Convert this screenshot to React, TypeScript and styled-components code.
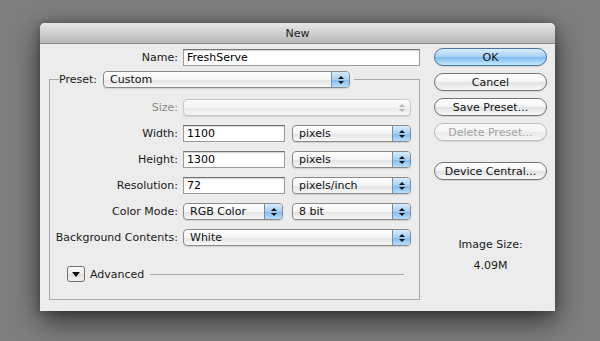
import React from 'react';
import styled, { createGlobalStyle } from 'styled-components';

const GlobalStyle = createGlobalStyle`
  html, body {
    margin: 0;
    padding: 0;
    background: #7e7e7e;
  }
  body {
    font-family: "DejaVu Sans", "Liberation Sans", sans-serif;
    font-size: 11px;
    color: #1a1a1a;
  }
`;

const Desktop = styled.div`
  width: 600px;
  height: 341px;
  box-sizing: border-box;
  padding: 23px 0 0 40px;
  background: #7e7e7e;
  overflow: hidden;
`;

const Window = styled.div`
  width: 515px;
  height: 288px;
  background: #ececec;
  border-radius: 5px 5px 0 0;
  box-shadow: 0 10px 28px rgba(0, 0, 0, 0.6), 0 0 10px rgba(0, 0, 0, 0.25);
  display: flex;
  flex-direction: column;
`;

const TitleBar = styled.div`
  height: 20px;
  border-bottom: 1px solid #8c8c8c;
  border-radius: 5px 5px 0 0;
  background: linear-gradient(#e6e6e6, #cfcfcf 50%, #b6b6b6);
  display: flex;
  align-items: center;
  justify-content: center;
  color: #1c1c1c;
  font-size: 11px;
`;

const Body = styled.div`
  display: flex;
  padding: 4px 8px 0 9px;
`;

const LeftColumn = styled.div`
  width: 371px;
  display: flex;
  flex-direction: column;
`;

const RightColumn = styled.div`
  width: 113px;
  margin-left: 14px;
  display: flex;
  flex-direction: column;
`;

const NameRow = styled.div`
  display: flex;
  align-items: center;
  height: 17px;
  margin-top: 1px;
`;

const Label = styled.span<{ $w: number; $disabled?: boolean }>`
  width: ${({ $w }) => $w}px;
  flex-shrink: 0;
  margin-right: 5px;
  display: flex;
  justify-content: flex-end;
  white-space: nowrap;
  color: ${({ $disabled }) => ($disabled ? '#8b8b8b' : '#1a1a1a')};
`;

const TextInput = styled.input<{ $w: number }>`
  width: ${({ $w }) => $w}px;
  height: 17px;
  box-sizing: border-box;
  flex-shrink: 0;
  margin: 0 7px 0 0;
  padding: 0 3px;
  border: 1px solid #9a9a9a;
  border-top-color: #727272;
  border-radius: 0;
  background: #fff;
  box-shadow: inset 0 1px 1px rgba(0, 0, 0, 0.18);
  font-family: inherit;
  font-size: 11px;
  color: #000;
  outline: none;
`;

const Group = styled.fieldset`
  width: 371px;
  box-sizing: border-box;
  margin: 5px 0 0;
  padding: 11px 8px 17px 9px;
  border: 1px solid #aaaaaa;
  min-width: 0;
`;

const Legend = styled.legend`
  padding: 0 4px 0 0;
`;

const LegendInner = styled.div`
  display: flex;
  align-items: center;
  height: 17px;
`;

const LegendLabel = styled.span`
  margin-right: 6px;
`;

const Row = styled.div`
  display: flex;
  align-items: center;
  height: 17px;
  & + & {
    margin-top: 9px;
  }
`;

const SelectBox = styled.div<{ $w: number; $disabled?: boolean; $gap?: number }>`
  width: ${({ $w }) => $w}px;
  height: 17px;
  box-sizing: border-box;
  flex-shrink: 0;
  margin-right: ${({ $gap }) => $gap ?? 0}px;
  display: flex;
  border: 1px solid ${({ $disabled }) => ($disabled ? '#c8c8c8' : '#8a8a8a')};
  border-radius: 4px;
  background: ${({ $disabled }) =>
    $disabled
      ? 'linear-gradient(#fbfbfb, #f2f2f2 50%, #e9e9e9 51%, #f5f5f5)'
      : 'linear-gradient(#ffffff, #f4f4f4 50%, #e3e3e3 51%, #f7f7f7)'};
  box-shadow: 0 1px 1px rgba(0, 0, 0, 0.12);
  overflow: hidden;
`;

const SelectText = styled.span`
  flex: 1;
  padding-left: 6px;
  line-height: 15px;
  white-space: nowrap;
  color: #111;
`;

const Stepper = styled.span<{ $disabled?: boolean }>`
  width: 17px;
  display: flex;
  flex-direction: column;
  align-items: center;
  justify-content: center;
  gap: 2px;
  border-left: 1px solid ${({ $disabled }) => ($disabled ? 'transparent' : '#6a92bd')};
  background: ${({ $disabled }) =>
    $disabled
      ? 'transparent'
      : 'linear-gradient(#d6ebfc, #a9d0f4 50%, #7fb9ee 51%, #b9ddfb)'};
`;

const ArrowUp = styled.span<{ $disabled?: boolean }>`
  width: 0;
  height: 0;
  border-left: 3px solid transparent;
  border-right: 3px solid transparent;
  border-bottom: 3px solid ${({ $disabled }) => ($disabled ? '#b4b4b4' : '#141414')};
`;

const ArrowDown = styled.span<{ $disabled?: boolean }>`
  width: 0;
  height: 0;
  border-left: 3px solid transparent;
  border-right: 3px solid transparent;
  border-top: 3px solid ${({ $disabled }) => ($disabled ? '#b4b4b4' : '#141414')};
`;

const AdvancedRow = styled.div`
  display: flex;
  align-items: center;
  height: 16px;
  margin-top: 20px;
  padding-left: 8px;
  padding-right: 7px;
`;

const Disclosure = styled.span`
  width: 18px;
  height: 16px;
  box-sizing: border-box;
  border: 1px solid #6f6f6f;
  border-radius: 3px;
  background: linear-gradient(#fdfdfd, #ececec 50%, #dcdcdc 51%, #f2f2f2);
  display: flex;
  align-items: center;
  justify-content: center;
  &::after {
    content: '';
    border-left: 4px solid transparent;
    border-right: 4px solid transparent;
    border-top: 5px solid #111;
  }
`;

const AdvancedText = styled.span`
  margin-left: 5px;
`;

const Rule = styled.span`
  flex: 1;
  height: 1px;
  margin-left: 6px;
  background: #a6a6a6;
`;

const PushButton = styled.div<{ $kind?: 'primary' | 'disabled'; $gap?: number }>`
  height: 18px;
  box-sizing: border-box;
  margin-bottom: ${({ $gap }) => $gap ?? 7}px;
  border-radius: 9px;
  display: flex;
  align-items: center;
  justify-content: center;
  font-size: 11px;
  white-space: nowrap;
  color: ${({ $kind }) => ($kind === 'disabled' ? '#a3a3a3' : '#111')};
  border: 1px solid
    ${({ $kind }) =>
      $kind === 'primary' ? '#4a74a8' : $kind === 'disabled' ? '#bdbdbd' : '#747474'};
  background: ${({ $kind }) =>
    $kind === 'primary'
      ? 'linear-gradient(#d9edfd, #a6d1f6 50%, #7cbbf0 51%, #c6e7fe)'
      : $kind === 'disabled'
        ? 'linear-gradient(#fbfbfb, #f3f3f3 50%, #eaeaea 51%, #f6f6f6)'
        : 'linear-gradient(#ffffff, #f3f3f3 50%, #e2e2e2 51%, #f8f8f8)'};
  box-shadow: 0 1px 1px rgba(0, 0, 0, 0.1);
`;

const SizeInfo = styled.div`
  margin-top: 47px;
  text-align: center;
  line-height: 21px;
  color: #1a1a1a;
`;

function Select({
  value,
  width,
  gap,
  disabled,
}: {
  value: string;
  width: number;
  gap?: number;
  disabled?: boolean;
}) {
  return (
    <SelectBox $w={width} $gap={gap} $disabled={disabled}>
      <SelectText>{value}</SelectText>
      <Stepper $disabled={disabled}>
        <ArrowUp $disabled={disabled} />
        <ArrowDown $disabled={disabled} />
      </Stepper>
    </SelectBox>
  );
}

function NewDocumentDialog() {
  return (
    <Window>
      <TitleBar>New</TitleBar>
      <Body>
        <LeftColumn>
          <NameRow>
            <Label $w={129}>Name:</Label>
            <TextInput $w={237} readOnly value="FreshServe" />
          </NameRow>
          <Group>
            <Legend>
              <LegendInner>
                <LegendLabel>Preset:</LegendLabel>
                <Select value="Custom" width={247} />
              </LegendInner>
            </Legend>
            <Row>
              <Label $w={119} $disabled>
                Size:
              </Label>
              <Select value="" width={228} disabled />
            </Row>
            <Row>
              <Label $w={119}>Width:</Label>
              <TextInput $w={102} readOnly value="1100" />
              <Select value="pixels" width={119} />
            </Row>
            <Row>
              <Label $w={119}>Height:</Label>
              <TextInput $w={102} readOnly value="1300" />
              <Select value="pixels" width={119} />
            </Row>
            <Row>
              <Label $w={119}>Resolution:</Label>
              <TextInput $w={102} readOnly value="72" />
              <Select value="pixels/inch" width={119} />
            </Row>
            <Row>
              <Label $w={119}>Color Mode:</Label>
              <Select value="RGB Color" width={100} gap={9} />
              <Select value="8 bit" width={119} />
            </Row>
            <Row>
              <Label $w={119}>Background Contents:</Label>
              <Select value="White" width={228} />
            </Row>
            <AdvancedRow>
              <Disclosure />
              <AdvancedText>Advanced</AdvancedText>
              <Rule />
            </AdvancedRow>
          </Group>
        </LeftColumn>
        <RightColumn>
          <PushButton $kind="primary">OK</PushButton>
          <PushButton>Cancel</PushButton>
          <PushButton>Save Preset...</PushButton>
          <PushButton $kind="disabled" $gap={21}>
            Delete Preset...
          </PushButton>
          <PushButton>Device Central...</PushButton>
          <SizeInfo>
            Image Size:
            <br />
            4.09M
          </SizeInfo>
        </RightColumn>
      </Body>
    </Window>
  );
}

export default function App() {
  return (
    <>
      <GlobalStyle />
      <Desktop>
        <NewDocumentDialog />
      </Desktop>
    </>
  );
}
